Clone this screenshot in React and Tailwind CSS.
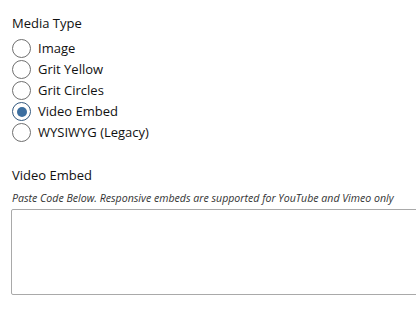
import React, { useState } from 'react';

const options = ['Image', 'Grit Yellow', 'Grit Circles', 'Video Embed', 'WYSIWYG (Legacy)'];

const Radio = ({ label, checked, onChange }) => (
  <label className="flex items-center h-[21px] cursor-pointer" onClick={onChange}>
    <span
      className={`w-[19px] h-[19px] rounded-full border-[1.5px] flex items-center justify-center shrink-0 ${
        checked ? 'border-[#33587e]' : 'border-[#6f6f6f]'
      }`}
    >
      {checked && <span className="w-[10px] h-[10px] rounded-full bg-[#3b6ea0]" />}
    </span>
    <span className="ml-[7px] text-[13px] text-[#111]">{label}</span>
  </label>
);

const App = () => {
  const [type, setType] = useState('Video Embed');

  return (
    <div className="w-[416px] h-[317px] bg-white overflow-hidden pl-[11px] pt-[13px]" style={{ fontFamily: '"Open Sans", sans-serif' }}>
      <div className="text-[13px] text-[#111] leading-[20px] mb-[5px] pl-[1px]">Media Type</div>
      <div className="flex flex-col pl-[1px]">
        {options.map((o) => (
          <Radio key={o} label={o} checked={type === o} onChange={() => setType(o)} />
        ))}
      </div>

      <div className="mt-[22px] text-[13px] text-[#111] leading-[20px] pl-[1px]">Video Embed</div>
      <div className="mt-[5px] text-[10.6px] italic text-[#333] leading-[16px] whitespace-nowrap pl-[1px]">
        Paste Code Below. Responsive embeds are supported for YouTube and Vimeo only
      </div>
      <textarea className="mt-[3px] w-[420px] h-[86px] border border-[#a9a9a9] rounded-[2px] block resize-none outline-none" />
    </div>
  );
};

export default App;
